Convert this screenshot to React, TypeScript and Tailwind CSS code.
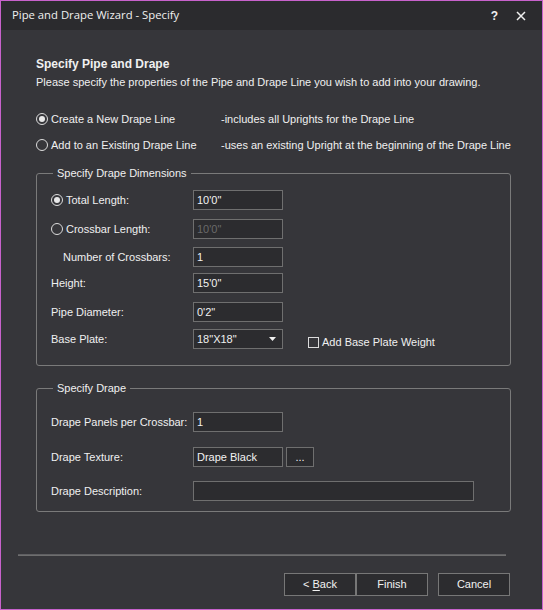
import type { ReactNode } from 'react';

const font = "font-['Liberation_Sans',Arial,sans-serif]";

const Radio = ({ checked }: { checked?: boolean }) => (
  <span className="w-[12px] h-[12px] rounded-full border border-[#dcdcdc] flex items-center justify-center shrink-0">
    {checked && <span className="w-[6px] h-[6px] rounded-full bg-[#e8e8e8]" />}
  </span>
);

const TextBox = ({ value, disabled, wide }: { value?: string; disabled?: boolean; wide?: boolean }) => (
  <div
    className={`h-[20px] ${wide ? 'w-[281px]' : 'w-[90px]'} border border-[#6f6f6f] bg-[#2c2c2f] flex items-center pl-[3px] ${
      disabled ? 'text-[#6a6a6a]' : 'text-[#f2f2f2]'
    }`}
  >
    {value}
  </div>
);

const Row = ({ label, indent, radio, checked, children, className }: {
  label: string;
  indent?: boolean;
  radio?: boolean;
  checked?: boolean;
  children: ReactNode;
  className: string;
}) => (
  <div className={`flex items-center h-[20px] ${className}`}>
    <div className={`w-[142px] flex items-center gap-[3px] ${indent ? 'pl-[12px]' : ''}`}>
      {radio && <Radio checked={checked} />}
      <span>{label}</span>
    </div>
    {children}
  </div>
);

const GroupBox = ({ title, children, className }: { title: string; children: ReactNode; className: string }) => (
  <fieldset className={`w-[475px] border border-[#7a7a7a] rounded-[3px] px-[14px] ${className}`}>
    <legend className="ml-[2px] px-[4px] leading-[14px]">{title}</legend>
    {children}
  </fieldset>
);

const Button = ({ children }: { children: ReactNode }) => (
  <button className="w-[72px] h-[23px] border border-[#777777] bg-[#2c2c2f] text-[#f2f2f2] flex items-center justify-center">
    {children}
  </button>
);

export default function App() {
  return (
    <div className={`w-[543px] h-[610px] border border-[#c862cc] bg-[#36363a] text-[#f0f0f0] text-[11px] ${font} flex flex-col`}>
      {/* title bar */}
      <div className="h-[29px] bg-[#2b2b2e] flex items-center pl-[11px] pr-[16px] shrink-0">
        <span className="text-[11.3px] font-['Open_Sans',sans-serif]">Pipe and Drape Wizard - Specify</span>
        <span className="ml-auto text-[12px] font-bold mr-[18px]">?</span>
        <svg width="10" height="10" viewBox="0 0 10 10">
          <path d="M1 1L9 9M9 1L1 9" stroke="#f0f0f0" strokeWidth="1.5" />
        </svg>
      </div>

      <div className="pl-[17px] flex flex-col flex-1">
        <div className="pl-[18px] flex flex-col">
          <div className="mt-[24px] h-[19px] flex items-center font-bold text-[12px]">Specify Pipe and Drape</div>
          <div className="h-[19px] flex items-center">
            Please specify the properties of the Pipe and Drape Line you wish to add into your drawing.
          </div>

          <div className="mt-[17px] h-[20px] flex items-center">
            <div className="w-[185px] flex items-center gap-[3px]">
              <Radio checked />
              <span>Create a New Drape Line</span>
            </div>
            <span>-includes all Uprights for the Drape Line</span>
          </div>
          <div className="mt-[6px] h-[20px] flex items-center">
            <div className="w-[185px] flex items-center gap-[3px]">
              <Radio />
              <span>Add to an Existing Drape Line</span>
            </div>
            <span>-uses an existing Upright at the beginning of the Drape Line</span>
          </div>

          <GroupBox title="Specify Drape Dimensions" className="mt-[11px] pb-[16px]">
            <Row label="Total Length:" radio checked className="mt-[10px]">
              <TextBox value={'10\'0"'} />
            </Row>
            <Row label="Crossbar Length:" radio className="mt-[9px]">
              <TextBox value={'10\'0"'} disabled />
            </Row>
            <Row label="Number of Crossbars:" indent className="mt-[8px]">
              <TextBox value="1" />
            </Row>
            <Row label="Height:" className="mt-[6px]">
              <TextBox value={'15\'0"'} />
            </Row>
            <Row label="Pipe Diameter:" className="mt-[9px]">
              <TextBox value={'0\'2"'} />
            </Row>
            <Row label="Base Plate:" className="mt-[7px]">
              <div className="h-[20px] w-[90px] border border-[#6f6f6f] bg-[#2c2c2f] flex items-center pl-[3px] pr-[6px]">
                <span>18"X18"</span>
                <svg className="ml-auto" width="7" height="4" viewBox="0 0 7 4">
                  <path d="M0 0H7L3.5 4Z" fill="#f0f0f0" />
                </svg>
              </div>
              <div className="ml-[25px] flex items-center gap-[3px] mt-[6px]">
                <span className="w-[11px] h-[11px] border border-[#dcdcdc]" />
                <span>Add Base Plate Weight</span>
              </div>
            </Row>
          </GroupBox>

          <GroupBox title="Specify Drape" className="mt-[15px] pb-[10px]">
            <Row label="Drape Panels per Crossbar:" className="mt-[17px]">
              <TextBox value="1" />
            </Row>
            <Row label="Drape Texture:" className="mt-[15px]">
              <TextBox value="Drape Black" />
              <div className="ml-[3px] w-[28px] h-[20px] border border-[#6f6f6f] bg-[#2c2c2f] flex items-end justify-center pb-[3px] leading-none">
                ...
              </div>
            </Row>
            <Row label="Drape Description:" className="mt-[14px]">
              <TextBox wide />
            </Row>
          </GroupBox>
        </div>

        <div className="mt-[42px] w-[488px] h-[2px] bg-[#5f5f62] border-b border-[#6e6e6e]" />

        <div className="mt-[17px] flex pl-[266px]">
          <Button>
            &lt;&nbsp;<span className="underline underline-offset-2">B</span>ack
          </Button>
          <Button>Finish</Button>
          <div className="ml-[10px]">
            <Button>Cancel</Button>
          </div>
        </div>
      </div>
    </div>
  );
}
